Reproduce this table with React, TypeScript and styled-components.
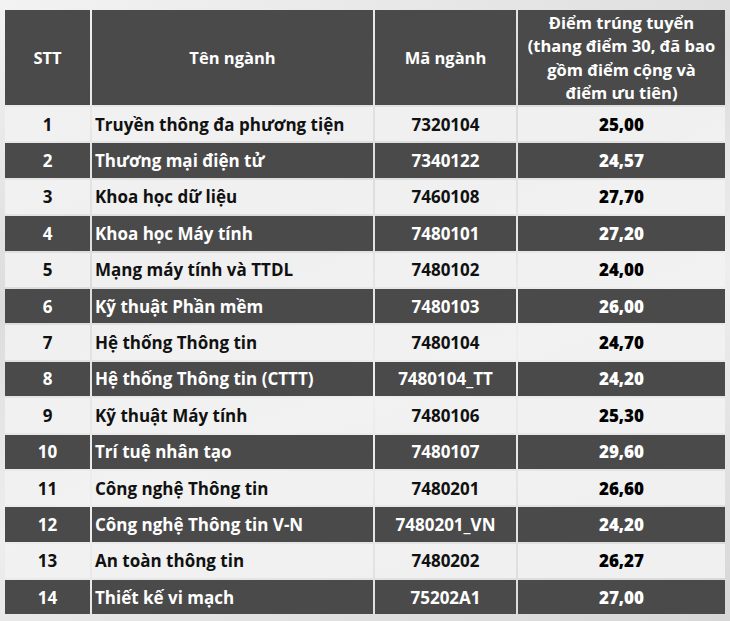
import React from 'react';
import styled, { createGlobalStyle } from 'styled-components';

const GlobalStyle = createGlobalStyle`
  html, body {
    margin: 0;
    padding: 0;
  }
  body {
    background: linear-gradient(160deg, #f3f3f3 0%, #dcdcdc 35%, #eeeeee 60%, #d6d6d6 100%);
    font-family: 'Open Sans', 'Noto Sans', sans-serif;
    width: 730px;
    height: 621px;
    overflow: hidden;
  }
`;

const Page = styled.div`
  box-sizing: border-box;
  padding: 10px 5px 0 5px;
  width: 730px;
  height: 621px;
`;

const Table = styled.div`
  display: grid;
  grid-template-columns: 85px 281px 141px 207px;
  grid-template-rows: 95px;
  grid-auto-rows: 34.4px;
  column-gap: 2px;
  row-gap: 2px;
`;

const HeadCell = styled.div`
  align-items: center;
  background: #4a4a4a;
  color: #ffffff;
  display: flex;
  font-size: 16.5px;
  font-weight: 700;
  justify-content: center;
  line-height: 23.5px;
  text-align: center;
`;

const Cell = styled.div<{ $dark: boolean; $align?: 'left' | 'center' }>`
  align-items: center;
  background: ${({ $dark }) => ($dark ? '#4a4a4a' : 'rgba(242, 242, 242, 0.9)')};
  box-sizing: border-box;
  color: ${({ $dark }) => ($dark ? '#ffffff' : '#111111')};
  display: flex;
  font-size: 17px;
  font-weight: 700;
  justify-content: ${({ $align }) => ($align === 'left' ? 'flex-start' : 'center')};
  padding-left: ${({ $align }) => ($align === 'left' ? '3px' : '0')};
  white-space: nowrap;
`;

const Score = styled(Cell)`
  color: ${({ $dark }) => ($dark ? '#ffffff' : '#000000')};
  font-weight: 800;
`;

const rows: [string, string, string][] = [
  ['Truyền thông đa phương tiện', '7320104', '25,00'],
  ['Thương mại điện tử', '7340122', '24,57'],
  ['Khoa học dữ liệu', '7460108', '27,70'],
  ['Khoa học Máy tính', '7480101', '27,20'],
  ['Mạng máy tính và TTDL', '7480102', '24,00'],
  ['Kỹ thuật Phần mềm', '7480103', '26,00'],
  ['Hệ thống Thông tin', '7480104', '24,70'],
  ['Hệ thống Thông tin (CTTT)', '7480104_TT', '24,20'],
  ['Kỹ thuật Máy tính', '7480106', '25,30'],
  ['Trí tuệ nhân tạo', '7480107', '29,60'],
  ['Công nghệ Thông tin', '7480201', '26,60'],
  ['Công nghệ Thông tin V-N', '7480201_VN', '24,20'],
  ['An toàn thông tin', '7480202', '26,27'],
  ['Thiết kế vi mạch', '75202A1', '27,00'],
];

const App: React.FC = () => (
  <>
    <GlobalStyle />
    <Page>
      <Table>
        <HeadCell>STT</HeadCell>
        <HeadCell>Tên ngành</HeadCell>
        <HeadCell>Mã ngành</HeadCell>
        <HeadCell>
          Điểm trúng tuyển
          <br />
          (thang điểm 30, đã bao
          <br />
          gồm điểm cộng và
          <br />
          điểm ưu tiên)
        </HeadCell>
        {rows.map(([name, code, score], i) => {
          const dark = i % 2 === 1;
          return (
            <React.Fragment key={code}>
              <Cell $dark={dark}>{i + 1}</Cell>
              <Cell $dark={dark} $align="left">
                {name}
              </Cell>
              <Cell $dark={dark}>{code}</Cell>
              <Score $dark={dark}>{score}</Score>
            </React.Fragment>
          );
        })}
      </Table>
    </Page>
  </>
);

export default App;
